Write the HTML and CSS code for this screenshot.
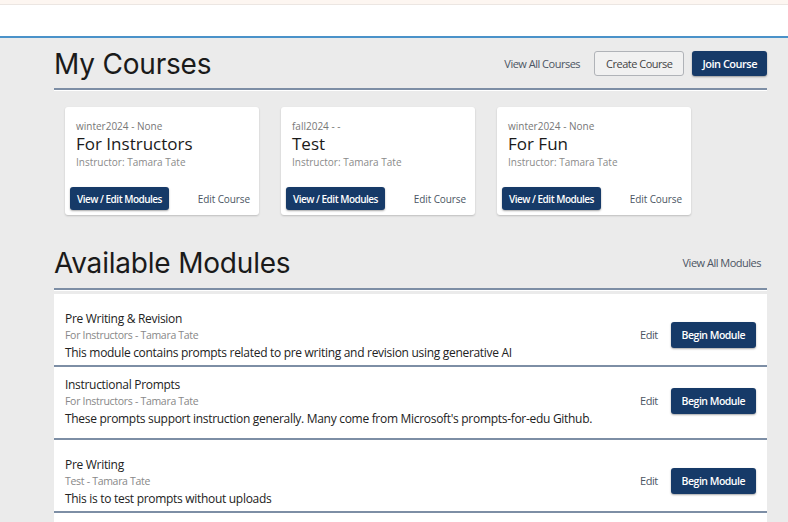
FILE: index.html
```html
<!DOCTYPE html>
<html>
<head>
<meta charset="utf-8">
<link rel="stylesheet" href="styles.css">
</head>
<body>
<div class="topstrip"></div>
<header class="navbar"></header>
<main class="page">
  <section class="section">
    <div class="section-head">
      <h1 class="section-title">My Courses</h1>
      <div class="head-actions">
        <a class="link">View All Courses</a>
        <button class="btn btn-outline">Create Course</button>
        <button class="btn btn-primary">Join Course</button>
      </div>
    </div>
    <div class="cards">
      <div class="card">
        <div class="card-term">winter2024 - None</div>
        <div class="card-title">For Instructors</div>
        <div class="card-instr">Instructor: Tamara Tate</div>
        <div class="card-actions">
          <button class="btn btn-primary btn-sm">View / Edit Modules</button>
          <a class="link link-sm">Edit Course</a>
        </div>
      </div>
      <div class="card">
        <div class="card-term">fall2024 - -</div>
        <div class="card-title">Test</div>
        <div class="card-instr">Instructor: Tamara Tate</div>
        <div class="card-actions">
          <button class="btn btn-primary btn-sm">View / Edit Modules</button>
          <a class="link link-sm">Edit Course</a>
        </div>
      </div>
      <div class="card">
        <div class="card-term">winter2024 - None</div>
        <div class="card-title">For Fun</div>
        <div class="card-instr">Instructor: Tamara Tate</div>
        <div class="card-actions">
          <button class="btn btn-primary btn-sm">View / Edit Modules</button>
          <a class="link link-sm">Edit Course</a>
        </div>
      </div>
    </div>
  </section>
  <section class="section">
    <div class="section-head modules-head">
      <h1 class="section-title">Available Modules</h1>
      <div class="head-actions">
        <a class="link">View All Modules</a>
      </div>
    </div>
    <div class="modules">
      <div class="module module-low">
        <div class="module-info">
          <div class="module-title">Pre Writing &amp; Revision</div>
          <div class="module-sub">For Instructors - Tamara Tate</div>
          <div class="module-desc">This module contains prompts related to pre writing and revision using generative AI</div>
        </div>
        <div class="module-actions">
          <a class="link">Edit</a>
          <button class="btn btn-primary btn-mod">Begin Module</button>
        </div>
      </div>
      <div class="module">
        <div class="module-info">
          <div class="module-title">Instructional Prompts</div>
          <div class="module-sub">For Instructors - Tamara Tate</div>
          <div class="module-desc">These prompts support instruction generally. Many come from Microsoft's prompts-for-edu Github.</div>
        </div>
        <div class="module-actions">
          <a class="link">Edit</a>
          <button class="btn btn-primary btn-mod">Begin Module</button>
        </div>
      </div>
      <div class="module module-low">
        <div class="module-info">
          <div class="module-title">Pre Writing</div>
          <div class="module-sub">Test - Tamara Tate</div>
          <div class="module-desc">This is to test prompts without uploads</div>
        </div>
        <div class="module-actions">
          <a class="link">Edit</a>
          <button class="btn btn-primary btn-mod">Begin Module</button>
        </div>
      </div>
      <div class="module-rest"></div>
    </div>
  </section>
</main>
</body>
</html>
```
FILE: styles.css
```css
* { box-sizing: border-box; }
html, body { margin: 0; padding: 0; }
body {
  background: #ebebeb;
  font-family: "Open Sans", "Liberation Sans", sans-serif;
  color: #222;
  overflow: hidden;
  height: 522px;
}
.topstrip {
  height: 5px;
  background: #fdf6f1;
  border-bottom: 1px solid #ece6e2;
}
.navbar {
  height: 33px;
  background: #fff;
  border-bottom: 2px solid #4a92c9;
}
.page {
  padding: 0 21px 0 54px;
}
.section-head {
  display: flex;
  align-items: center;
  justify-content: space-between;
  height: 52px;
  border-bottom: 2px solid #7d8ea5;
  box-shadow: 0 1px 0 #fff;
}
.section-title {
  margin: 2px 0 0;
  font-family: "Inter", "Open Sans", sans-serif;
  font-weight: 400;
  font-size: 28px;
  color: #1a1a1a;
  letter-spacing: -0.2px;
}
.head-actions {
  display: flex;
  align-items: center;
  gap: 8px;
}
.link {
  font-size: 11px;
  letter-spacing: -0.5px;
  color: #4b5563;
  text-decoration: none;
  margin-right: 6px;
  white-space: nowrap;
}
.btn {
  font-family: "Open Sans", "Liberation Sans", sans-serif;
  font-size: 11px;
  letter-spacing: -0.5px;
  border-radius: 3px;
  cursor: pointer;
  white-space: nowrap;
}
.btn-outline {
  height: 25px;
  padding: 0 11px;
  background: #f1f1f1;
  border: 1px solid #b0b3b8;
  color: #444;
}
.btn-primary {
  height: 25px;
  padding: 0 10px;
  background: #163a68;
  border: none;
  color: #fff;
  font-weight: 600;
  box-shadow: 0 1px 2px rgba(0,0,0,0.35);
}
.cards {
  display: flex;
  gap: 22px;
  padding: 17px 11px 0;
}
.card {
  width: 194px;
  height: 108px;
  background: #fff;
  border-radius: 3px;
  box-shadow: 0 1px 2px rgba(0,0,0,0.2);
  padding: 12px 9px 0 11px;
  display: flex;
  flex-direction: column;
}
.card-term {
  font-size: 10px;
  color: #777;
  line-height: 14px;
}
.card-title {
  font-size: 17px;
  color: #1a1a1a;
  line-height: 22px;
}
.card-instr {
  font-size: 10px;
  color: #8a8a8a;
  line-height: 14px;
}
.card-actions {
  margin-top: auto;
  margin-bottom: 5px;
  margin-left: -6px;
  display: flex;
  align-items: center;
  justify-content: space-between;
}
.btn-sm {
  height: 23px;
  padding: 0 7px;
  font-size: 10px;
}
.link-sm {
  font-size: 10px;
  letter-spacing: -0.1px;
  margin-right: 0;
}
.modules-head {
  margin-top: 21px;
  height: 54px;
}
.modules {
  margin-top: 4px;
  background: #fff;
}
.module {
  display: flex;
  align-items: center;
  justify-content: space-between;
  height: 73px;
  padding: 0 11px;
  border-bottom: 2px solid #7d8ea5;
}
.module-low {
  padding-top: 14px;
}
.module-title {
  font-size: 12px;
  letter-spacing: -0.3px;
  color: #222;
  line-height: 16px;
}
.module-sub {
  font-size: 10.5px;
  letter-spacing: -0.3px;
  color: #888;
  line-height: 16px;
}
.module-desc {
  font-size: 12px;
  letter-spacing: -0.3px;
  color: #222;
  line-height: 20px;
}
.module-actions {
  display: flex;
  align-items: center;
  gap: 13px;
  margin-bottom: 4px;
}
.module-actions .link {
  margin-right: 0;
}
.btn-mod {
  height: 26px;
  padding: 0 11px;
  font-size: 10.5px;
}
.module-rest {
  height: 20px;
}
```
